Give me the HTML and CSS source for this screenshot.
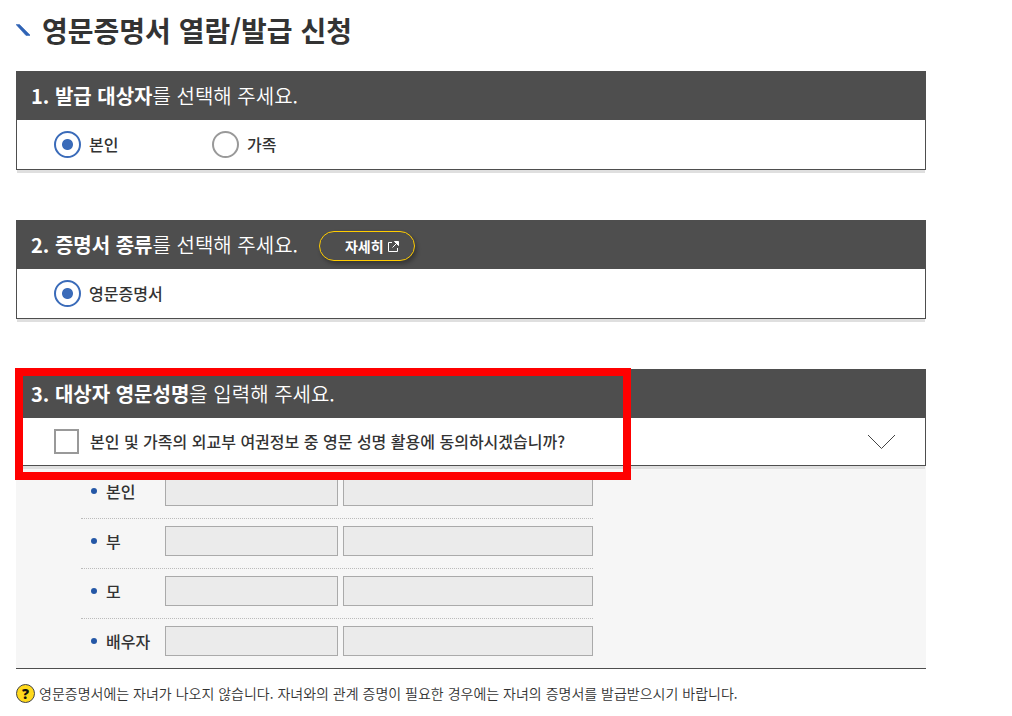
FILE: index.html
```
<!DOCTYPE html>
<html lang="ko">

<head>
	<meta charset="UTF-8">
	<meta name="viewport" content="width=device-width, initial-scale=1.0">
	<title>영문증명서 열람/발급 신청</title>
	<link rel="stylesheet" href="styles.css">
</head>

<body>
	<form class="container">
		<h1 class="page-title">
			<svg class="title-icon" width="14" height="12" viewBox="0 0 14 12" aria-hidden="true">
				<path d="M0 .5h3.5L14 11v.5h-4z" fill="#2f63b5" stroke="#2f63b5" stroke-width="0.5" />
			</svg>
			영문증명서 열람/발급 신청
		</h1>

		<section class="step">
			<h2 class="step-title"><span><strong>1. 발급 대상자</strong>를 선택해 주세요.</span></h2>
			<div class="step-body">
				<div class="choice">
					<input type="radio" id="self" name="target" checked>
					<label for="self">본인</label>
				</div>
				<div class="choice">
					<input type="radio" id="family" name="target">
					<label for="family">가족</label>
				</div>
			</div>
		</section>

		<section class="step">
			<div class="step-title">
				<h2><strong>2. 증명서 종류</strong>를 선택해 주세요.</h2>
				<button type="button" class="detail-btn">
					자세히
					<svg width="11" height="11" viewBox="0 0 11 11" fill="none" stroke="#fff" aria-hidden="true">
						<path d="M4 1.5H.5v9h9V7M9 2 4.5 6.5" />
						<path d="M6.5.5h4v4z" fill="#fff" />
					</svg>
				</button>
			</div>
			<div class="step-body">
				<div class="choice">
					<input type="radio" id="english" name="kind" checked>
					<label for="english">영문증명서</label>
				</div>
			</div>
		</section>

		<section class="step">
			<div class="highlight"></div>
			<h2 class="step-title"><span><strong>3. 대상자 영문성명</strong>을 입력해 주세요.</span></h2>
			<div class="step-body consent">
				<input type="checkbox" id="agree">
				<label for="agree">본인 및 가족의 외교부 여권정보 중 영문 성명 활용에 동의하시겠습니까?</label>
				<button type="button" class="toggle-btn" aria-label="펼치기">
					<svg width="27" height="14" viewBox="0 0 27 14" fill="none" stroke="#444" aria-hidden="true">
						<path d="M0 0l13.5 13.5L27 0" />
					</svg>
				</button>
			</div>
		</section>

		<div class="names">
			<ul>
				<li>
					<label for="self-last">본인</label>
					<input type="text" id="self-last" class="last-name" disabled>
					<input type="text" class="first-name" aria-label="본인 이름" disabled>
				</li>
				<li>
					<label for="father-last">부</label>
					<input type="text" id="father-last" class="last-name" disabled>
					<input type="text" class="first-name" aria-label="부 이름" disabled>
				</li>
				<li>
					<label for="mother-last">모</label>
					<input type="text" id="mother-last" class="last-name" disabled>
					<input type="text" class="first-name" aria-label="모 이름" disabled>
				</li>
				<li>
					<label for="spouse-last">배우자</label>
					<input type="text" id="spouse-last" class="last-name" disabled>
					<input type="text" class="first-name" aria-label="배우자 이름" disabled>
				</li>
			</ul>
		</div>

		<p class="note">
			<span class="note-icon">?</span>
			영문증명서에는 자녀가 나오지 않습니다. 자녀와의 관계 증명이 필요한 경우에는 자녀의 증명서를 발급받으시기 바랍니다.
		</p>
	</form>
</body>

</html>
```
FILE: styles.css
```
* {
	margin: 0;
	padding: 0;
	box-sizing: border-box;
}

body {
	background-color: #fff;
	color: #333;
	font-family: "Noto Sans CJK KR", sans-serif;
	font-size: 16px;
}

.container {
	padding: 8px 86px 8px 16px;
}

.page-title {
	display: flex;
	align-items: center;
	gap: 12px;
	margin-bottom: 19px;
	font-size: 28px;
	line-height: 44px;
}

/* steps */
.step {
	position: relative;
	margin-bottom: 50px;
	border: 1px solid #4e4e4e;
	box-shadow: 0 4px 0 -1px #dfdfdf;
}

.step-title {
	display: flex;
	align-items: center;
	gap: 21px;
	height: 48px;
	padding-left: 14px;
	background-color: #4e4e4e;
	color: #fff;
	font-size: 20px;
	font-weight: 350;
}

.step-title > span,
.step-title h2 {
	padding-bottom: 2px;
	font-size: 20px;
	font-weight: 350;
}

.step-title strong {
	font-weight: 700;
}

.step-body {
	display: flex;
	align-items: center;
	height: 49px;
	padding-left: 37px;
}

.step-body label {
	padding-bottom: 2px;
	font-weight: 500;
}

.choice {
	display: flex;
	align-items: center;
	gap: 8px;
	width: 158px;
}

input[type="radio"],
input[type="checkbox"] {
	appearance: none;
	flex: none;
	border: 2px solid #999;
	background-color: #fff;
}

input[type="radio"] {
	width: 27px;
	height: 27px;
	border-radius: 50%;
}

input[type="radio"]:checked {
	border-color: #3a6bb9;
	background: radial-gradient(circle, #3a6bb9 5px, #fff 6px);
}

.detail-btn {
	display: flex;
	align-items: center;
	gap: 4px;
	height: 30px;
	margin-top: 2px;
	padding: 0 15px 0 25px;
	border: 1px solid #fc0;
	border-radius: 15px;
	background-color: #4e4e4e;
	box-shadow: 2px 3px 4px rgba(0, 0, 0, 0.3);
	color: #fff;
	font-family: inherit;
	font-size: 14px;
	font-weight: 700;
}

/* consent */
.consent {
	gap: 11px;
	height: 47px;
	padding-right: 30px;
}

input[type="checkbox"] {
	width: 25px;
	height: 25px;
}

input[type="checkbox"]:checked {
	background-color: #3a6bb9;
}

.toggle-btn {
	display: flex;
	margin-left: auto;
	border: none;
	background: none;
}

.highlight {
	position: absolute;
	top: -2px;
	left: -2px;
	bottom: -15px;
	width: 616px;
	border: 8px solid #f00;
	pointer-events: none;
	z-index: 1;
}

/* english names */
.names {
	margin-top: -50px;
	padding: 2px 0 0 65px;
	border-bottom: 1px solid #4e4e4e;
	background-color: #f6f6f6;
}

.names ul {
	width: 512px;
	list-style: none;
}

.names li {
	display: flex;
	align-items: center;
	height: 50px;
	padding: 0 0 5px 10px;
	border-top: 1px dotted #bbb;
}

.names li:first-child {
	border-top-color: transparent;
}

.names li::before {
	content: "";
	width: 6px;
	height: 6px;
	margin-right: 9px;
	border-radius: 50%;
	background-color: #2457a6;
}

.names label {
	flex: 1;
	font-weight: 500;
}

.names input {
	height: 30px;
	border: 1px solid #aaa;
	background-color: #ebebeb;
}

.last-name {
	width: 173px;
	margin-right: 5px;
}

.first-name {
	width: 250px;
}

.note {
	display: flex;
	align-items: center;
	gap: 4px;
	margin-top: 14px;
	font-size: 14px;
	font-weight: 350;
	line-height: 20px;
}

.note-icon {
	width: 19px;
	height: 19px;
	border: 1px solid #444;
	border-radius: 50%;
	background-color: #ffd91c;
	color: #111;
	font-family: "Open Sans", sans-serif;
	font-weight: 800;
	line-height: 17px;
	text-align: center;
}
```
